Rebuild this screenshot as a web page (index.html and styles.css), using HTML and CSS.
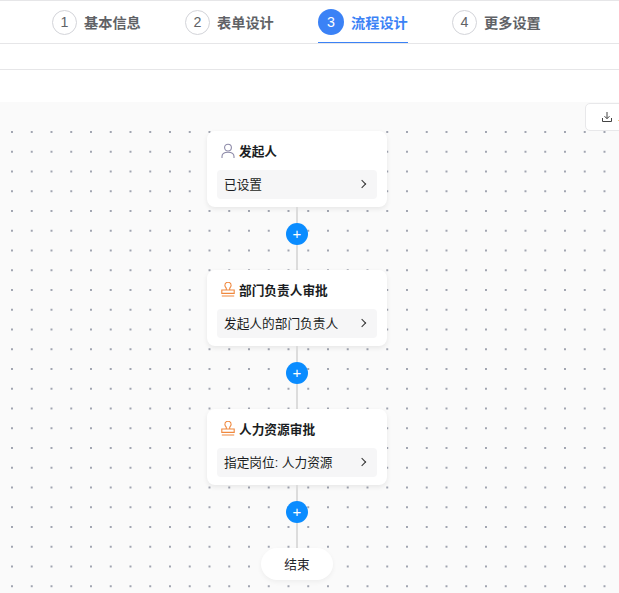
FILE: index.html
```html
<!DOCTYPE html>
<html lang="zh-CN">
<head>
    <meta charset="UTF-8">
    <title>流程设计</title>
    <link rel="stylesheet" href="styles.css">
</head>
<body>
    <div class="steps">
        <div class="step"><span class="step-num">1</span><span class="step-name">基本信息</span></div>
        <div class="step"><span class="step-num">2</span><span class="step-name">表单设计</span></div>
        <div class="step active"><span class="step-num">3</span><span class="step-name">流程设计</span></div>
        <div class="step"><span class="step-num">4</span><span class="step-name">更多设置</span></div>
    </div>
    <div class="toolbar"></div>
    <div class="canvas">
        <button class="export">
            <svg width="12" height="12" viewBox="0 0 12 12" fill="none" stroke="#444" stroke-width="1">
                <path d="M6 1v6.500M3.500 5.200 6 7.700l2.500-2.500M1.500 7v3.500h9V7"/>
            </svg>
            <span class="export-text">导出</span>
        </button>
        <div class="flow">
            <div class="node">
                <div class="node-title">
                    <svg class="node-icon" width="14" height="16" viewBox="0 0 14 16" fill="none" stroke="#8d8aa8" stroke-width="1.1">
                        <circle cx="7" cy="4.600" r="3.400"/>
                        <path d="M1 15v-1.500C1 10.500 3.500 9.200 7 9.200s6 1.300 6 4.300V15"/>
                    </svg>
                    发起人
                </div>
                <div class="node-body"><span>已设置</span><span class="chevron"></span></div>
            </div>
            <div class="link"><span class="add">+</span></div>
            <div class="node">
                <div class="node-title">
                    <svg class="node-icon" width="14" height="15" viewBox="0 0 14 15" fill="none" stroke="#f0883e" stroke-width="1.1">
                        <path d="M5.300 8V6.600C5.300 5.600 3.900 5 3.900 3.400a3.100 3.100 0 0 1 6.200 0C10.100 5 8.700 5.600 8.700 6.600V8"/>
                        <path d="M.8 8h12.400v3.400H.8zM.8 14h12.400"/>
                    </svg>
                    部门负责人审批
                </div>
                <div class="node-body"><span>发起人的部门负责人</span><span class="chevron"></span></div>
            </div>
            <div class="link"><span class="add">+</span></div>
            <div class="node">
                <div class="node-title">
                    <svg class="node-icon" width="14" height="15" viewBox="0 0 14 15" fill="none" stroke="#f0883e" stroke-width="1.1">
                        <path d="M5.300 8V6.600C5.300 5.600 3.900 5 3.900 3.400a3.100 3.100 0 0 1 6.200 0C10.100 5 8.700 5.600 8.700 6.600V8"/>
                        <path d="M.8 8h12.400v3.400H.8zM.8 14h12.400"/>
                    </svg>
                    人力资源审批
                </div>
                <div class="node-body"><span>指定岗位: 人力资源</span><span class="chevron"></span></div>
            </div>
            <div class="link"><span class="add">+</span></div>
            <div class="end">结束</div>
        </div>
    </div>
</body>
</html>
```
FILE: styles.css
```css
html, body {
    margin: 0;
    height: 593px;
    overflow: hidden;
}
body {
    font-family: "Liberation Sans", "Noto Sans CJK SC", sans-serif;
    background: #fff;
    color: #1f2329;
    font-size: 12.7px;
}
.steps {
    display: flex;
    height: 42px;
    padding-left: 52px;
    border-top: 1px solid #e6e6e8;
    border-bottom: 1px solid #e6e6e8;
}
.step {
    display: flex;
    align-items: center;
    gap: 7px;
    width: 133px;
    color: #606266;
    font-size: 14.200px;
    font-weight: 600;
}
.step-num {
    width: 23px;
    height: 23px;
    border: 1px solid #d3d4d9;
    border-radius: 50%;
    display: flex;
    align-items: center;
    justify-content: center;
    font-weight: 400;
}
.step.active {
    width: 134px;
    color: #3b82f6;
    position: relative;
}
.step.active .step-num {
    width: 26px;
    height: 26px;
    border: none;
    background: #3b82f6;
    color: #fff;
}
.step.active::after {
    content: "";
    position: absolute;
    left: 0;
    bottom: 0;
    width: 90px;
    height: 1px;
    background: #3b82f6;
}
.toolbar {
    height: 25px;
    border-bottom: 1px solid #e6e6e8;
    margin-bottom: 32px;
}
.canvas {
    position: relative;
    height: 491px;
    background-color: #fafafa;
    overflow: hidden;
}
.canvas::before {
    content: "";
    position: absolute;
    top: 29px;
    left: 11px;
    right: 0;
    bottom: 0;
    background-size: 19.750px 19.750px;
    background-image: radial-gradient(circle at 1px 1px, #a0a4b0 1.1px, transparent 1.3px);
}
.export {
    position: absolute;
    top: 1px;
    left: 585px;
    width: 70px;
    height: 28px;
    padding: 0 0 0 15px;
    display: flex;
    align-items: center;
    gap: 5px;
    background: #fff;
    border: 1px solid #e8e8ea;
    border-radius: 5px;
    font: inherit;
    color: #333;
    white-space: nowrap;
    z-index: 1;
}
.flow {
    position: relative;
    width: 180px;
    margin-left: 207px;
    padding-top: 29px;
    display: flex;
    flex-direction: column;
    align-items: center;
}
.node {
    width: 180px;
    height: 76px;
    box-sizing: border-box;
    padding: 0 10px;
    background: #fff;
    border-radius: 8px;
    box-shadow: 0 2px 5px rgba(0, 0, 0, 0.08);
}
.node-title {
    height: 39px;
    display: flex;
    align-items: center;
    padding-left: 4px;
    font-weight: 700;
    color: #1a1d22;
}
.node-icon {
    margin-right: 4px;
}
.node-body {
    height: 27px;
    padding: 0 8px 2px 7px;
    display: flex;
    align-items: center;
    justify-content: space-between;
    background: #f6f6f7;
    border-radius: 4px;
    color: #1a1d22;
}
.chevron {
    width: 5px;
    height: 5px;
    margin-right: 4px;
    border-top: 1.300px solid #333;
    border-right: 1.300px solid #333;
    transform: rotate(45deg);
}
.link {
    width: 2px;
    height: 63px;
    background: #dcdcdc;
    display: flex;
    align-items: flex-start;
    justify-content: center;
}
.add {
    flex: none;
    width: 22px;
    height: 22px;
    margin-top: 16px;
    border-radius: 50%;
    background: #0a8cff;
    color: #fff;
    font-size: 15px;
    line-height: 22px;
    text-align: center;
}
.end {
    width: 72px;
    height: 31px;
    padding-bottom: 1px;
    background: #fff;
    border-radius: 16px;
    display: flex;
    align-items: center;
    justify-content: center;
    box-shadow: 0 2px 5px rgba(0, 0, 0, 0.05);
}
```
